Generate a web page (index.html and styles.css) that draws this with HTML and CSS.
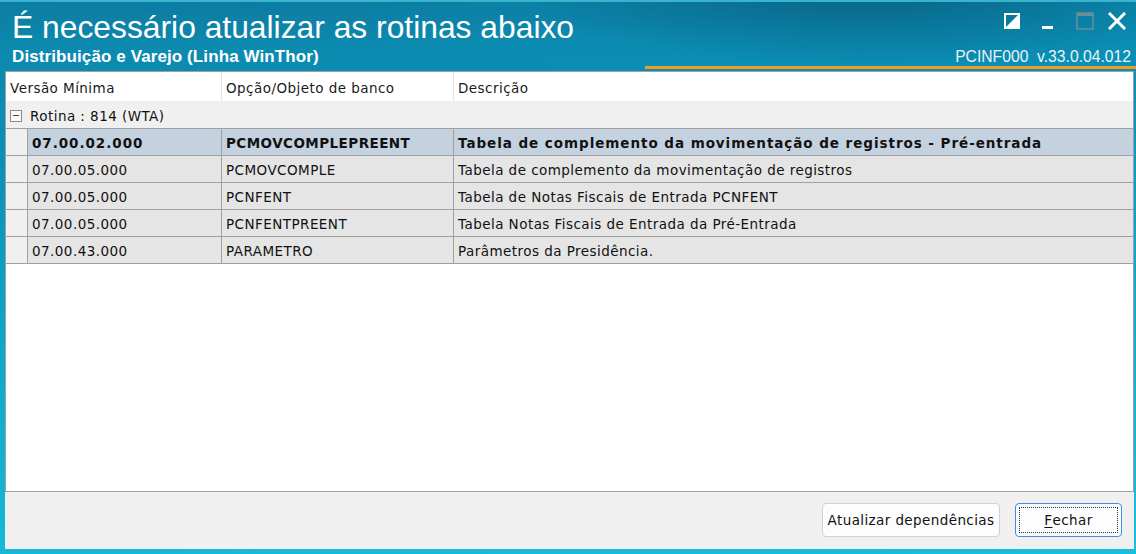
FILE: index.html
```
<!DOCTYPE html>
<html lang="pt">
<head>
<meta charset="utf-8">
<title>Atualizar rotinas</title>
<link rel="stylesheet" href="styles.css">
</head>
<body>
<div class="window">
  <header class="titlebar">
    <div class="row-top">
      <h1 class="title">É necessário atualizar as rotinas abaixo</h1>
      <div class="controls">
        <svg class="ctl" width="16" height="16" viewBox="0 0 16 16"><rect x="1" y="1" width="14" height="14" fill="none" stroke="#fff" stroke-width="2"/><polygon points="1,15 15,1 15,15" fill="#fff"/></svg>
        <svg class="ctl" width="14" height="16" viewBox="0 0 14 16"><rect x="1" y="13" width="11" height="3" fill="#fff"/></svg>
        <svg class="ctl" width="18" height="18" viewBox="0 0 18 18"><rect x="1" y="1" width="16" height="16" fill="none" stroke="#6d8d98" stroke-width="1.5"/><rect x="1" y="1" width="16" height="3" fill="#6d8d98"/></svg>
        <svg class="ctl" width="18" height="18" viewBox="0 0 18 18"><path d="M2 2 L16 16 M16 2 L2 16" stroke="#fff" stroke-width="3" stroke-linecap="square"/></svg>
      </div>
    </div>
    <div class="row-sub">
      <div class="subtitle">Distribuição e Varejo (Linha WinThor)</div>
      <div class="version">PCINF000&nbsp; v.33.0.04.012</div>
    </div>
    <div class="row-line"><span class="orange"></span></div>
  </header>

  <main class="grid">
    <div class="grid-head">
      <div class="hc c1">Versão Mínima</div>
      <div class="hc c2">Opção/Objeto de banco</div>
      <div class="hc c3">Descrição</div>
    </div>
    <div class="group">
      <span class="toggle"></span>
      <span class="group-label">Rotina : 814 (WTA)</span>
    </div>
    <div class="rows">
      <div class="row selected">
        <div class="ind"></div><div class="cell c1">07.00.02.000</div><div class="cell c2">PCMOVCOMPLEPREENT</div><div class="cell c3">Tabela de complemento da movimentação de registros - Pré-entrada</div>
      </div>
      <div class="row">
        <div class="ind"></div><div class="cell c1">07.00.05.000</div><div class="cell c2">PCMOVCOMPLE</div><div class="cell c3">Tabela de complemento da movimentação de registros</div>
      </div>
      <div class="row">
        <div class="ind"></div><div class="cell c1">07.00.05.000</div><div class="cell c2">PCNFENT</div><div class="cell c3">Tabela de Notas Fiscais de Entrada PCNFENT</div>
      </div>
      <div class="row">
        <div class="ind"></div><div class="cell c1">07.00.05.000</div><div class="cell c2">PCNFENTPREENT</div><div class="cell c3">Tabela Notas Fiscais de Entrada da Pré-Entrada</div>
      </div>
      <div class="row">
        <div class="ind"></div><div class="cell c1">07.00.43.000</div><div class="cell c2">PARAMETRO</div><div class="cell c3">Parâmetros da Presidência.</div>
      </div>
    </div>
  </main>

  <footer class="footer">
    <button class="btn">Atualizar dependências</button>
    <button class="btn default"><span class="focus"><u>F</u>echar</span></button>
  </footer>
</div>
</body>
</html>
```
FILE: styles.css
```
* { box-sizing: border-box; }
html, body { margin: 0; padding: 0; }
body { width: 1136px; height: 554px; overflow: hidden; font-family: "DejaVu Sans", sans-serif; }

.window {
  width: 1136px; height: 554px;
  display: flex; flex-direction: column;
  padding: 0 2px 5px 5px;
  background:
    radial-gradient(ellipse 520px 110px at 880px -10px, rgba(4,70,100,0.55), rgba(4,70,100,0) 70%),
    radial-gradient(ellipse 900px 60px at 250px 0px, rgba(10,100,140,0.35), rgba(10,100,140,0) 80%),
    linear-gradient(176deg, #0e86aa 0%, #0a90b8 25%, #0ea8ca 55%, #17bfdc 100%);
  box-shadow: inset 0 2px 0 #38b4cc;
}

.titlebar { display: flex; flex-direction: column; margin-left: -5px; margin-right: -2px; height: 71px; }
.row-top { display: flex; justify-content: space-between; align-items: flex-start; height: 43px; }
.title {
  margin: 0; padding: 11px 0 0 12px;
  font-family: "Liberation Sans", Arial, sans-serif; font-weight: normal;
  font-size: 31.8px; line-height: 32px; color: #fff;
}
.controls { display: flex; align-items: flex-start; padding-top: 12px; padding-right: 10px; }
.ctl { display: block; }
.controls .ctl:nth-child(1) { margin-right: 21px; margin-top: 1px; }
.controls .ctl:nth-child(2) { margin-right: 21px; margin-top: 1px; }
.controls .ctl:nth-child(3) { margin-right: 14px; }

.row-sub { display: flex; justify-content: space-between; align-items: flex-start; height: 22px; padding: 6px 5px 0 12px; }
.subtitle { font-family: "Liberation Sans", Arial, sans-serif; font-weight: bold; font-size: 17px; line-height: 16px; color: #fff; letter-spacing: 0.1px; }
.version { font-family: "Liberation Sans", Arial, sans-serif; font-size: 15.7px; line-height: 16px; color: #e8f4f8; }

.row-line { display: flex; justify-content: flex-end; height: 6px; padding-top: 1px; }
.orange { display: block; width: 491px; height: 3px; background: #f29c22; }

.grid {
  flex: 1; background: #fff; border: 1px solid #a0a0a0;
  font-size: 13.5px; letter-spacing: 0.45px; color: #111;
  display: flex; flex-direction: column;
}
.grid-head { display: flex; height: 30px; background: #fff; border-bottom: 1px solid #f0f0f0; }
.hc { display: flex; align-items: center; padding: 2px 0 0 4px; border-right: 1px solid #e4e4e4; color: #1a1a1a; white-space: nowrap; }
.grid-head .c1 { width: 216px; }
.grid-head .c2 { width: 232px; }
.grid-head .c3 { flex: 1; border-right: none; }

.group { display: flex; align-items: center; height: 26px; background: #f0f0f0; padding: 1px 0 0 4px; }
.toggle { width: 12px; height: 12px; border: 1px solid #8a8a8a; position: relative; background: #fafafa; margin-right: 8px; }
.toggle::after { content: ""; position: absolute; left: 2px; right: 2px; top: 4px; height: 1px; background: #444; }

.rows { display: flex; flex-direction: column; border-top: 1px solid #a0a0a0; }
.row { display: flex; height: 27px; background: #e5e5e5; border-bottom: 1px solid #a0a0a0; }
.row .ind { width: 22px; background: #f0f0f0; border-right: 1px solid #a0a0a0; }
.cell { display: flex; align-items: center; padding: 1px 0 0 4px; border-right: 1px solid #a0a0a0; white-space: nowrap; }
.row .c1 { width: 194px; }
.row .c2 { width: 232px; }
.row .c3 { flex: 1; border-right: none; }
.row.selected { background: #c4d2df; font-weight: bold; letter-spacing: 0.95px; }
.row.selected .c2 { letter-spacing: 0.45px; }

.footer { height: 57px; background: #f0f0f0; display: flex; justify-content: flex-end; align-items: flex-start; padding: 11px 12px 0 0; gap: 15px; }
.btn {
  height: 34px; font-family: "DejaVu Sans", sans-serif; font-size: 13.5px; letter-spacing: 0.4px; color: #111;
  background: #fdfdfd; border: 1px solid #d0d0d0; border-radius: 4px; padding: 0 4px;
}
.btn:first-child { width: 178px; }
.btn.default { width: 107px; border: 1px solid #3d8ee0; padding: 3px; }
.btn.default .focus { display: flex; align-items: center; justify-content: center; height: 100%; border: 1px dotted #333; }
.btn u { text-decoration: underline; text-underline-offset: 2px; }
```
